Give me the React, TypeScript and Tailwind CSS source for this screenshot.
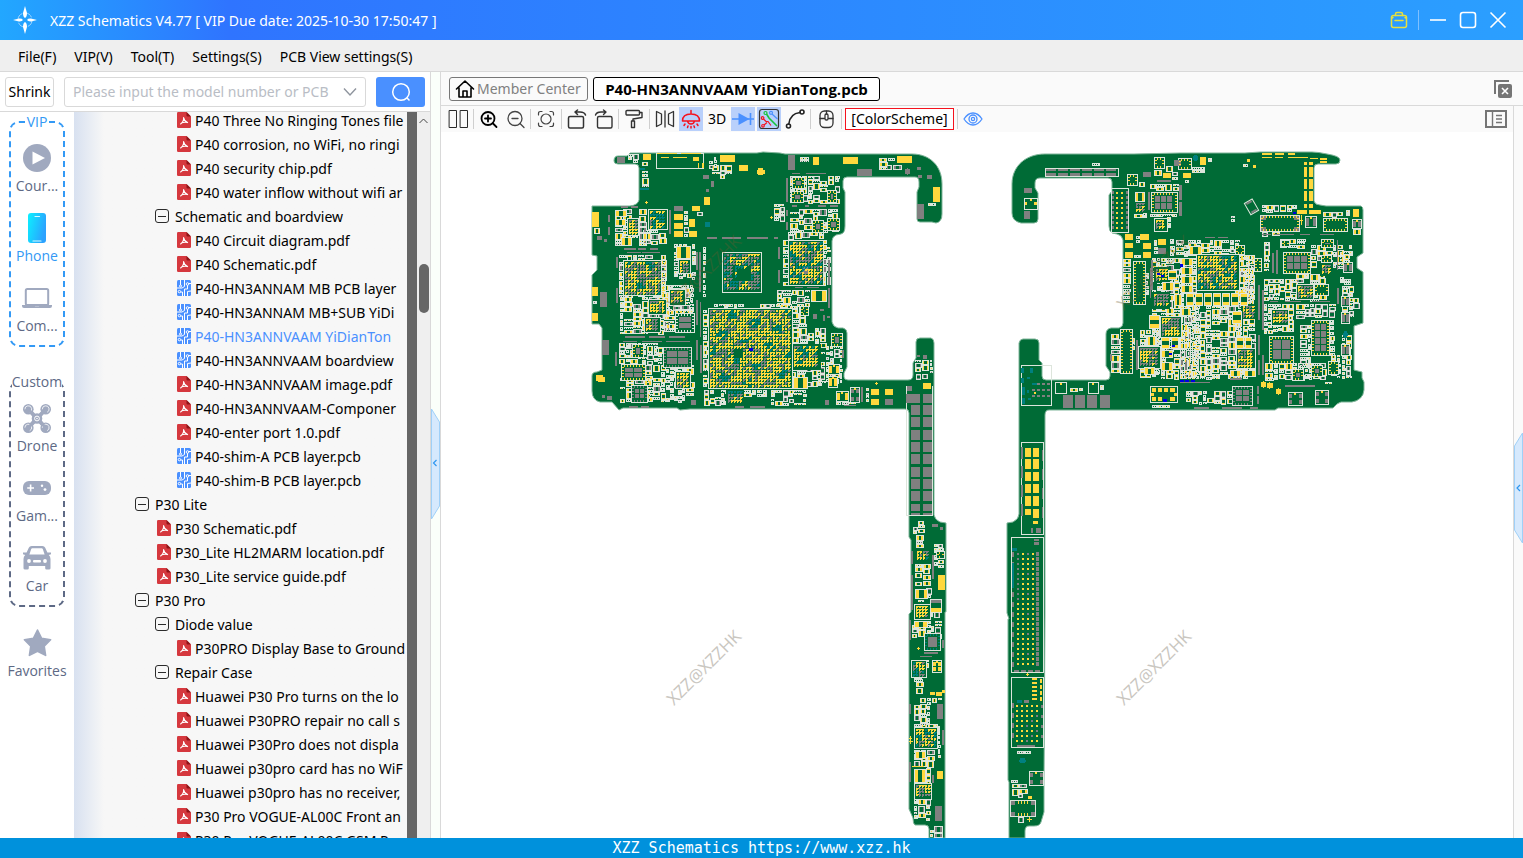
import type { ReactNode } from "react";

/* ---------- board drawing ---------- */

type Box = [number, number, number, number];
type Ink = "green" | "white" | "yellow" | "grey" | "teal" | "blue";

const INK: Record<Ink, string> = {
  green: "#006b36",
  white: "#dde5dc",
  yellow: "#ffd83d",
  grey: "#808080",
  teal: "#008080",
  blue: "#0000e0",
};
const ORDER: Ink[] = ["white", "green", "grey", "yellow", "teal", "blue"];
const CHIP_ORDER: Ink[] = ["green", "white", "grey", "yellow", "teal", "blue"];

function createPlotter(seedValue: number) {
  let seed = seedValue;
  const rnd = () => {
    seed = (seed * 1664525 + 1013904223) % 4294967296;
    return seed / 4294967296;
  };
  const blank = () => ({ green: "", white: "", yellow: "", grey: "", teal: "", blue: "" }) as Record<Ink, string>;
  const layers = [blank(), blank()];
  const rect = (ink: Ink, x: number, y: number, w: number, h: number, layer = 1) => {
    layers[layer][ink] += `M${x} ${y}h${w}v${h}h${-w}z`;
  };
  const frame = (x: number, y: number, w: number, h: number, layer = 1) => {
    rect("white", x, y, w, 1, layer);
    rect("white", x, y + h - 1, w, 1, layer);
    rect("white", x, y + 1, 1, h - 2, layer);
    rect("white", x + w - 1, y + 1, 1, h - 2, layer);
  };
  const many = (ink: Ink, list: Box[]) => list.forEach(([x, y, w, h]) => rect(ink, x, y, w, h));

  /* small passives packed in rows */
  const cluster = (list: Box[], gap = 0.12) =>
    list.forEach(([x0, y0, w0, h0]) => {
      let x = x0;
      while (x < x0 + w0 - 2) {
        const colW = Math.min(4 + Math.floor(rnd() * 6), x0 + w0 - x);
        let y = y0;
        while (y < y0 + h0 - 2) {
          const ch = Math.min(3 + Math.floor(rnd() * 5), y0 + h0 - y);
          const r = rnd();
          if (r > gap) {
            const w = colW - (rnd() > 0.6 ? 1 : 0);
            const h = ch - (rnd() > 0.6 ? 1 : 0);
            if (w < 5 || h < 4) {
              rect("white", x, y, w, Math.max(2, h - (h > 3 ? 1 : 0)), 0);
              const dot = rnd();
              const ink: Ink = dot > 0.55 ? "yellow" : dot > 0.35 ? "grey" : "green";
              for (let i = 1; i < w - 1; i += 2) rect(i % 4 === 1 ? ink : "green", x + i, y + 1, 1, 1, 0);
            } else {
              frame(x, y, w, h, 0);
              const pad: Ink = rnd() > 0.3 ? "yellow" : "grey";
              if (w >= h) {
                const pw = Math.max(1, Math.floor((w - 2) / 3));
                rect(pad, x + 1, y + 1, pw, h - 2, 0);
                rect(pad, x + w - 1 - pw, y + 1, pw, h - 2, 0);
              } else {
                rect(pad, x + 1, y + 1, w - 2, 1, 0);
                rect(pad, x + 1, y + h - 2, w - 2, 1, 0);
              }
            }
          }
          y += ch;
        }
        x += colW;
      }
    });

  const balls = (x0: number, y0: number, w: number, h: number, mix: Ink[], hole?: Box, framed = true) => {
    rect("green", x0 - 2, y0 - 2, w + 4, h + 4);
    if (framed) frame(x0 - 2, y0 - 2, w + 4, h + 4);
    for (let y = y0; y < y0 + h - 1; y += 3) {
      for (let x = x0; x < x0 + w - 1; x += 3) {
        if (hole && x > hole[0] && x < hole[0] + hole[2] && y > hole[1] && y < hole[1] + hole[3]) continue;
        const wave = Math.sin(x * 0.23 + y * 0.13) + Math.cos(y * 0.29 - x * 0.09) + (rnd() - 0.5) * 1.6;
        const ink = mix[Math.min(mix.length - 1, Math.max(0, Math.floor(((wave + 2) / 4) * mix.length)))];
        rect(ink, x, y, 2, 2);
        if (rnd() > 0.2) rect(ink, x + 2, y, 1, 1);
        if (rnd() > 0.2) rect(ink, x, y + 2, 1, 1);
      }
    }
  };

  /* packaged chip: frame, edge pins and optional thermal pads */
  const chip = (x: number, y: number, w: number, h: number, cols = 0, rows = 0, pin: Ink = "yellow") => {
    rect("green", x, y, w, h);
    frame(x, y, w, h);
    for (let i = x + 3; i < x + w - 3; i += 3) {
      rect(pin, i, y + 1, 1, 2);
      rect(pin, i, y + h - 3, 1, 2);
    }
    for (let j = y + 3; j < y + h - 3; j += 3) {
      rect(pin, x + 1, j, 2, 1);
      rect(pin, x + w - 3, j, 2, 1);
    }
    if (cols && rows) {
      const pw = Math.floor((w - 7) / cols);
      const ph = Math.floor((h - 7) / rows);
      for (let c = 0; c < cols; c++)
        for (let r = 0; r < rows; r++) rect("grey", x + 4 + c * pw, y + 4 + r * ph, pw - 1, ph - 1);
    }
  };

  /* framed square with four corner pads */
  const crystal = (x: number, y: number, w: number, h: number, pad: Ink = "grey") => {
    rect("green", x, y, w, h);
    frame(x, y, w, h);
    rect(pad, x + 1, y + 2, 3, 4);
    rect(pad, x + w - 4, y + 2, 3, 4);
    rect(pad, x + 1, y + h - 6, 3, 4);
    rect(pad, x + w - 4, y + h - 6, 3, 4);
    rect("yellow", x + Math.floor(w / 2) - 1, y + 1, 2, 2);
  };

  /* two-terminal part with wide end pads */
  const part = (x: number, y: number, w: number, h: number, upright = false) => {
    rect("green", x, y, w, h);
    frame(x, y, w, h);
    if (upright) {
      const p = Math.floor((h - 2) / 3);
      rect("yellow", x + 1, y + 1, w - 2, p);
      rect("yellow", x + 1, y + h - 1 - p, w - 2, p);
    } else {
      const p = Math.floor((w - 2) / 3);
      rect("yellow", x + 1, y + 1, p, h - 2);
      rect("yellow", x + w - 1 - p, y + 1, p, h - 2);
    }
  };

  return { rect, frame, many, cluster, balls, chip, crystal, part, layers };
}

type Plotter = ReturnType<typeof createPlotter>;

function plotLeft(): Plotter {
  const p = createPlotter(42);
  p.frame(656, 153, 48, 16);
  p.many("yellow", [
    [657, 153, 20, 1], [681, 153, 20, 1], [661, 157, 8, 1], [673, 157, 14, 1], [693, 157, 6, 4], [698, 163, 1, 5], [702, 163, 2, 5],
    [643, 154, 8, 6], [720, 155, 15, 7], [739, 165, 9, 6], [758, 168, 5, 7], [757, 170, 8, 4], [704, 197, 6, 8], [692, 206, 8, 5],
    [674, 214, 9, 6], [674, 223, 9, 6], [674, 231, 9, 6], [689, 219, 6, 8], [689, 231, 8, 6],
    [592, 212, 7, 15], [592, 287, 6, 9], [592, 313, 6, 8], [596, 375, 7, 6], [598, 377, 7, 5],
    [813, 157, 6, 8], [843, 157, 15, 7], [897, 156, 15, 7], [933, 187, 7, 15],
    [871, 389, 8, 6], [885, 389, 8, 6], [871, 399, 8, 6], [923, 383, 8, 6],
    [938, 575, 7, 15], [937, 771, 6, 8], [930, 692, 5, 3], [936, 692, 6, 4], [942, 690, 3, 3], [875, 383, 3, 1], [876, 382, 1, 3],
    [645, 202, 3, 1], [646, 201, 1, 3], [770, 217, 3, 1], [771, 216, 1, 3],
  ]);
  p.many("grey", [
    [617, 157, 8, 6], [674, 206, 9, 5], [703, 175, 6, 4], [711, 181, 3, 6], [706, 189, 3, 3],
    [621, 206, 7, 2], [631, 206, 7, 2], [608, 215, 2, 7], [608, 227, 2, 8], [597, 236, 5, 4], [604, 239, 3, 3],
    [600, 292, 7, 15], [602, 340, 7, 15], [602, 395, 3, 3], [607, 396, 5, 4], [669, 210, 2, 24],
    [707, 237, 10, 2], [722, 237, 19, 2], [747, 237, 21, 2], [774, 237, 4, 2],
    [624, 248, 12, 2], [638, 248, 8, 2], [650, 248, 8, 2], [627, 252, 14, 1], [642, 252, 18, 1],
    [616, 257, 2, 11], [616, 288, 2, 15], [615, 352, 2, 14], [696, 252, 2, 18], [699, 252, 2, 40], [696, 300, 2, 25], [700, 302, 1, 35],
    [625, 336, 20, 2], [649, 336, 16, 2], [669, 336, 16, 2], [623, 341, 14, 1], [642, 341, 20, 1], [666, 341, 24, 1],
    [696, 340, 2, 20], [700, 345, 2, 28], [691, 400, 5, 5], [629, 406, 9, 2], [641, 406, 8, 2], [735, 406, 9, 2], [750, 406, 15, 2],
    [788, 155, 7, 15], [857, 169, 15, 7], [905, 169, 5, 5], [907, 168, 1, 7], [917, 167, 4, 3], [918, 175, 4, 3], [927, 175, 5, 4],
    [917, 204, 7, 15], [786, 178, 2, 24], [792, 173, 8, 1], [806, 173, 20, 1], [786, 210, 2, 6], [786, 222, 2, 8],
    [792, 205, 5, 2], [805, 205, 4, 2], [818, 205, 8, 2], [830, 205, 8, 2], [778, 247, 2, 12], [778, 270, 2, 13], [828, 260, 2, 25], [828, 288, 2, 20],
    [795, 287, 8, 1], [807, 287, 12, 1], [813, 314, 4, 5], [820, 309, 4, 2], [823, 315, 2, 6], [827, 316, 3, 2], [842, 350, 2, 8],
    [885, 399, 8, 6], [861, 387, 2, 15], [825, 400, 4, 5], [844, 405, 12, 1], [917, 355, 3, 2], [923, 355, 4, 4],
    [907, 386, 5, 5], [906, 394, 14, 9], [923, 394, 9, 9], [932, 524, 6, 3], [940, 527, 3, 3], [911, 551, 2, 13], [911, 575, 2, 35],
    [932, 555, 2, 24], [924, 652, 14, 2], [920, 656, 12, 1], [909, 620, 2, 20], [909, 704, 2, 10], [909, 762, 2, 20],
    [937, 704, 6, 15], [935, 806, 7, 15], [942, 730, 2, 15], [932, 775, 2, 8], [942, 640, 2, 8],
  ]);
  [405, 417, 430, 442, 454, 467, 479, 491, 504].forEach((y, i) => {
    p.rect("grey", 911, y, 9, i === 8 ? 7 : 10);
    p.rect("grey", 923, y, 9, i === 8 ? 7 : 10);
  });
  p.rect("grey", 911, 513, 9, 2);
  p.rect("grey", 923, 513, 9, 2);
  p.rect("white", 906, 386, 1, 130);
  p.rect("white", 906, 515, 27, 1);
  p.rect("white", 932, 386, 1, 130);
  p.rect("teal", 705, 222, 5, 5);
  p.rect("teal", 640, 188, 9, 2);
  p.rect("teal", 640, 168, 5, 2);
  p.cluster([
    [628, 154, 12, 9], [642, 162, 8, 28], [709, 157, 8, 12], [712, 165, 20, 10], [720, 175, 6, 6], [684, 211, 5, 27], [697, 212, 7, 4],
    [615, 209, 32, 37], [643, 230, 26, 17], [594, 228, 6, 6], [593, 298, 5, 8],
    [619, 255, 48, 43], [660, 262, 8, 32], [674, 244, 22, 36], [620, 297, 52, 38], [662, 285, 32, 28], [666, 310, 28, 24], [684, 288, 10, 16],
    [619, 343, 44, 22], [644, 365, 52, 38], [620, 378, 30, 26], [703, 247, 3, 50], [703, 310, 5, 78], [704, 390, 34, 16], [743, 390, 26, 8], [714, 304, 76, 5],
    [800, 157, 11, 14], [879, 158, 16, 12], [886, 165, 18, 8], [928, 203, 8, 5],
    [790, 176, 50, 28], [790, 209, 50, 24], [774, 204, 11, 18], [783, 240, 48, 46], [788, 232, 38, 8], [777, 290, 34, 17], [790, 306, 19, 22],
    [791, 328, 36, 20], [820, 346, 23, 38], [790, 366, 32, 22], [771, 390, 36, 16], [836, 402, 20, 3], [866, 388, 3, 16],
    [915, 360, 18, 14], [916, 374, 12, 6],
    [913, 521, 12, 14], [916, 535, 10, 14], [934, 544, 10, 24], [915, 564, 16, 22], [926, 588, 6, 12], [918, 600, 12, 5], [929, 612, 12, 6],
    [912, 621, 30, 18], [914, 672, 10, 10], [916, 682, 8, 14], [914, 698, 17, 28], [914, 724, 24, 25], [914, 750, 23, 18], [926, 768, 5, 30], [914, 799, 18, 22],
    [917, 660, 14, 10], [932, 698, 11, 5], [930, 826, 13, 12], [938, 726, 3, 34],
  ], 0.1);
  p.balls(650, 211, 16, 17, ["teal", "yellow", "teal", "yellow", "grey"]);
  p.balls(629, 220, 8, 14, ["yellow", "grey", "yellow"]);
  p.balls(625, 262, 35, 32, ["yellow", "grey", "grey", "yellow", "grey", "yellow", "teal"]);
  p.part(676, 246, 15, 13);
  p.balls(680, 261, 9, 11, ["grey", "yellow"]);
  p.balls(650, 301, 15, 12, ["yellow", "grey", "yellow"]);
  p.balls(646, 319, 13, 12, ["grey", "yellow", "grey"]);
  p.balls(671, 291, 13, 13, ["yellow", "grey", "yellow"]);
  p.chip(675, 313, 20, 20, 1, 2, "white");
  p.chip(663, 347, 29, 21, 2, 2, "grey");
  p.chip(621, 364, 25, 17, 2, 2);
  p.chip(631, 385, 17, 18, 2, 2, "grey");
  p.balls(677, 373, 12, 14, ["yellow", "grey", "yellow"]);
  p.chip(632, 344, 12, 14, 1, 1);
  p.part(615, 210, 12, 7);
  p.part(615, 219, 11, 7);
  p.part(621, 237, 11, 9);
  p.balls(710, 310, 81, 77, ["yellow", "yellow", "grey", "yellow", "yellow", "grey", "yellow", "teal"], [732, 348, 10, 9]);
  p.rect("blue", 749, 348, 4, 3);
  p.balls(724, 254, 36, 37, ["teal", "grey", "yellow", "grey", "teal", "grey"], [732, 264, 18, 17]);
  p.balls(735, 266, 12, 12, ["yellow", "teal", "yellow"], [737, 268, 8, 8], false);
  p.balls(728, 391, 14, 13, ["teal", "grey", "yellow"], undefined, false);
  p.balls(790, 242, 32, 42, ["yellow", "grey", "teal", "yellow", "grey", "yellow"]);
  p.rect("grey", 802, 266, 7, 8);
  p.chip(792, 177, 13, 12, 1, 1);
  p.chip(791, 191, 13, 12, 1, 1);
  p.chip(827, 190, 10, 13, 1, 1);
  p.chip(812, 220, 12, 13, 1, 1);
  p.chip(827, 218, 13, 13, 1, 1);
  p.part(811, 290, 16, 12);
  p.balls(794, 346, 25, 22, ["yellow", "teal", "yellow", "grey", "yellow"], undefined, false);
  p.part(793, 377, 15, 12);
  p.chip(831, 333, 12, 14, 1, 1);
  p.crystal(828, 364, 12, 11, "yellow");
  p.crystal(828, 376, 10, 12, "yellow");
  p.crystal(836, 391, 13, 11, "yellow");
  p.crystal(850, 387, 10, 16);
  p.chip(800, 306, 9, 10, 1, 1);
  p.balls(917, 551, 12, 10, ["teal", "yellow", "grey"], undefined, false);
  p.part(915, 589, 13, 10);
  p.rect("green", 930, 599, 12, 14);
  p.frame(930, 599, 12, 14);
  p.rect("grey", 931, 600, 10, 3);
  p.rect("yellow", 931, 608, 10, 4);
  p.chip(936, 551, 9, 8);
  p.balls(916, 606, 13, 12, ["yellow", "grey", "yellow"]);
  p.part(914, 621, 14, 7);
  p.chip(924, 633, 17, 18, 1, 1, "teal");
  p.balls(913, 662, 12, 14, ["teal", "yellow", "grey", "teal"]);
  p.crystal(932, 660, 10, 13, "yellow");
  p.balls(916, 729, 20, 18, ["yellow", "yellow", "teal", "yellow", "grey", "yellow"]);
  p.part(914, 769, 12, 14);
  p.part(915, 751, 11, 8);
  p.balls(916, 785, 14, 13, ["yellow", "grey", "yellow"]);
  p.many("yellow", [[917, 648, 3, 1], [918, 647, 1, 3], [909, 738, 3, 1], [909, 741, 4, 1], [910, 736, 1, 8], [912, 766, 12, 1]]);
  return p;
}

function plotRight(): Plotter {
  const p = createPlotter(1207);
  p.frame(1045, 168, 74, 9);
  for (let i = 0; i < 6; i++) {
    p.rect("grey", 1046 + i * 12, 169, 10, 2);
    p.rect("grey", 1046 + i * 12, 173, 10, 3);
  }
  p.many("grey", [
    [1024, 188, 8, 5], [1024, 211, 6, 8], [1143, 172, 8, 5], [1148, 192, 2, 18], [1179, 202, 3, 14], [1179, 185, 3, 15], [1157, 180, 14, 2],
    [1174, 160, 7, 6], [1158, 248, 8, 6], [1151, 260, 2, 30], [1150, 268, 1, 30], [1136, 340, 2, 30], [1110, 354, 2, 7],
    [1063, 395, 10, 13], [1075, 395, 10, 13], [1087, 395, 10, 13], [1100, 395, 10, 13],
    [1205, 237, 10, 1], [1218, 237, 10, 1], [1262, 234, 9, 1], [1274, 234, 20, 1], [1300, 234, 10, 1], [1320, 234, 14, 1],
    [1272, 253, 2, 20], [1276, 250, 2, 24], [1337, 240, 1, 30], [1337, 288, 2, 16], [1258, 285, 2, 35], [1262, 290, 2, 40], [1258, 335, 2, 20], [1262, 355, 2, 20],
    [1258, 360, 2, 15], [1270, 301, 8, 1], [1285, 301, 16, 1], [1312, 301, 18, 1], [1230, 378, 12, 2], [1285, 385, 30, 2], [1194, 407, 15, 2], [1222, 407, 20, 2],
    [1250, 407, 8, 2], [1257, 386, 2, 8], [1257, 396, 2, 8], [1180, 382, 30, 1],
    [1036, 528, 5, 5], [1031, 528, 2, 5], [1034, 539, 5, 2], [1034, 542, 5, 3],
  ]);
  p.many("yellow", [
    [1163, 173, 8, 5], [1183, 173, 8, 5], [1200, 157, 6, 8], [1125, 234, 8, 6], [1140, 234, 9, 6], [1125, 243, 8, 5], [1143, 243, 8, 6], [1125, 252, 8, 6],
    [1143, 252, 8, 6], [1158, 239, 8, 6], [1262, 153, 10, 2], [1275, 153, 9, 2], [1288, 153, 7, 2], [1262, 157, 10, 1], [1275, 157, 8, 1], [1288, 157, 20, 1],
    [1310, 158, 8, 1], [1320, 158, 7, 2], [1320, 161, 7, 2],
    [1304, 162, 3, 3], [1309, 162, 4, 3], [1304, 167, 3, 10], [1309, 167, 4, 10], [1304, 179, 3, 10], [1309, 179, 4, 10], [1304, 191, 3, 10], [1309, 191, 4, 10],
    [1304, 204, 3, 4], [1309, 204, 4, 4], [1297, 210, 10, 4], [1309, 210, 12, 4], [1353, 209, 6, 8], [1253, 165, 3, 3], [1247, 159, 3, 3],
    [1261, 382, 5, 5], [1263, 381, 1, 7], [1267, 383, 6, 5], [1269, 382, 1, 7], [1276, 389, 5, 5], [1278, 388, 1, 7], [1301, 215, 1, 10], [1300, 220, 3, 1],
    [1025, 448, 6, 9], [1033, 448, 6, 9], [1025, 459, 6, 10], [1033, 459, 6, 10], [1025, 472, 6, 9], [1033, 472, 6, 9], [1025, 484, 6, 9], [1033, 484, 6, 9],
    [1025, 496, 6, 10], [1033, 496, 6, 10], [1025, 509, 6, 6], [1033, 509, 6, 9], [1033, 521, 5, 3],
    [1026, 674, 3, 1], [1027, 673, 1, 3], [1027, 819, 5, 1], [1029, 817, 1, 5], [1028, 796, 4, 3],
  ]);
  p.cluster([
    [1092, 163, 9, 4], [1139, 182, 8, 5], [1154, 170, 8, 8], [1166, 166, 8, 6], [1172, 172, 6, 8], [1150, 184, 29, 7], [1150, 214, 27, 3], [1167, 217, 4, 14],
    [1134, 210, 13, 9], [1136, 236, 4, 8], [1134, 255, 8, 3], [1154, 240, 4, 16], [1170, 239, 5, 17], [1185, 180, 5, 6], [1192, 167, 14, 8], [1208, 158, 6, 8], [1243, 160, 6, 8],
    [1123, 259, 9, 44], [1111, 334, 9, 40], [1130, 338, 5, 12], [1145, 273, 4, 28],
    [1152, 258, 45, 122], [1140, 330, 20, 48], [1176, 240, 66, 18], [1235, 255, 20, 52], [1180, 306, 62, 74], [1238, 304, 18, 75], [1238, 255, 18, 50],
    [1231, 216, 8, 6], [1262, 205, 35, 8], [1262, 232, 18, 5], [1323, 212, 22, 6], [1346, 210, 5, 8], [1353, 229, 8, 6],
    [1264, 242, 8, 32], [1280, 239, 28, 10], [1311, 245, 42, 24], [1340, 252, 13, 34], [1264, 279, 36, 22], [1296, 274, 30, 10], [1310, 295, 20, 8],
    [1264, 304, 30, 30], [1296, 304, 40, 16], [1300, 325, 11, 45], [1330, 320, 6, 36], [1265, 363, 64, 18], [1331, 355, 10, 24], [1342, 286, 12, 34], [1342, 335, 10, 44],
    [1353, 298, 7, 12], [1325, 382, 10, 4],
    [1186, 391, 48, 14], [1070, 388, 14, 4], [1100, 385, 4, 8], [1152, 405, 20, 3],
    [1017, 751, 14, 4], [1011, 780, 7, 4], [1012, 784, 16, 12], [1018, 794, 8, 5], [1018, 817, 8, 8], [1196, 305, 4, 70],
  ], 0.07);
  p.crystal(1024, 198, 14, 12, "green");
  p.rect("yellow", 1025, 202, 2, 3);
  p.rect("yellow", 1034, 202, 3, 3);
  p.frame(1111, 188, 18, 45);
  for (let i = 0; i < 8; i++) {
    p.rect("yellow", 1116, 192 + i * 5, 2, 2);
    p.rect("yellow", 1121, 192 + i * 5, 2, 2);
    p.rect("grey", 1112, 191 + i * 5, 2, 3);
    p.rect("grey", 1126, 191 + i * 5, 2, 3);
  }
  p.chip(1127, 174, 11, 12);
  p.chip(1154, 157, 11, 12);
  p.chip(1178, 158, 14, 12);
  p.part(1135, 192, 10, 10);
  p.balls(1136, 203, 9, 8, ["yellow", "grey", "yellow"], undefined, false);
  p.chip(1151, 192, 27, 21, 3, 2);
  p.balls(1156, 220, 10, 10, ["yellow", "grey", "yellow"]);
  p.chip(1133, 261, 13, 44);
  p.chip(1120, 329, 13, 45);
  p.balls(1156, 269, 12, 12, ["yellow", "grey", "yellow"], undefined, false);
  p.balls(1154, 294, 14, 13, ["yellow", "grey", "grey", "yellow"], undefined, false);
  p.balls(1162, 318, 18, 18, ["yellow", "grey", "grey", "yellow"]);
  p.balls(1140, 348, 19, 19, ["yellow", "grey", "grey", "yellow"]);
  p.part(1149, 315, 11, 14, true);
  p.part(1168, 270, 9, 10, true);
  p.part(1162, 282, 12, 9);
  p.part(1174, 294, 8, 12);
  p.part(1161, 337, 9, 12, true);
  p.part(1171, 337, 8, 12, true);
  p.part(1147, 336, 9, 10);
  p.part(1161, 350, 12, 8);
  p.part(1161, 362, 12, 9);
  p.part(1144, 367, 11, 8);
  p.many("blue", [[1157, 273, 3, 2], [1161, 275, 3, 2], [1172, 345, 3, 2], [1169, 353, 3, 2], [1180, 264, 3, 3], [1293, 212, 3, 2], [1180, 380, 4, 2], [1185, 380, 4, 2], [1191, 380, 4, 2]]);
  p.balls(1198, 256, 40, 33, ["yellow", "grey", "yellow", "teal", "grey", "yellow"]);
  for (let i = 0; i < 4; i++) p.part(1181, 258 + i * 9, 12, 8);
  for (let i = 0; i < 7; i++) p.part(1186 + i * 9, 293, 8, 13, true);
  p.part(1189, 246, 13, 9);
  p.part(1181, 308, 10, 8);
  p.chip(1235, 245, 10, 10);
  p.chip(1254, 258, 8, 14);
  p.balls(1243, 306, 12, 11, ["yellow", "grey", "yellow"], undefined, false);
  p.part(1232, 311, 10, 13, true);
  p.part(1236, 337, 8, 12, true);
  p.part(1245, 337, 7, 12, true);
  p.balls(1238, 350, 16, 17, ["grey", "yellow", "grey", "yellow"]);
  p.part(1230, 370, 11, 7);
  p.part(1244, 370, 12, 7);
  p.chip(1260, 215, 40, 17);
  p.many("grey", [[1261, 216, 5, 4], [1294, 216, 5, 4], [1261, 227, 5, 4], [1294, 227, 5, 4]]);
  p.crystal(1305, 216, 12, 12);
  p.chip(1323, 218, 25, 14);
  p.crystal(1352, 219, 10, 10);
  p.chip(1283, 252, 28, 22, 3, 2);
  p.chip(1281, 240, 9, 7);
  p.chip(1321, 239, 13, 9, 1, 1);
  p.chip(1321, 255, 11, 8, 1, 1);
  p.balls(1322, 265, 9, 9, ["yellow", "grey", "yellow"], undefined, false);
  p.balls(1298, 286, 14, 12, ["grey", "yellow", "grey"]);
  p.chip(1314, 284, 15, 12);
  p.balls(1273, 311, 14, 13, ["grey", "yellow", "yellow", "grey"]);
  p.chip(1311, 320, 19, 36, 2, 4);
  p.chip(1269, 336, 25, 28, 2, 2);
  p.chip(1292, 369, 12, 12, 1, 1);
  p.chip(1311, 365, 12, 12, 1, 1);
  p.chip(1328, 361, 11, 14);
  p.crystal(1343, 262, 10, 11);
  p.crystal(1341, 296, 9, 11);
  p.crystal(1341, 312, 9, 12);
  p.crystal(1341, 344, 9, 12);
  p.rect("green", 1150, 386, 28, 17);
  p.frame(1150, 386, 28, 17);
  p.many("yellow", [
    [1152, 388, 4, 4], [1158, 388, 4, 4], [1164, 388, 4, 4], [1170, 388, 5, 4],
    [1152, 397, 4, 4], [1158, 397, 4, 4], [1170, 397, 5, 4], [1151, 393, 3, 3], [1174, 393, 3, 3],
  ]);
  p.rect("blue", 1163, 399, 4, 3);
  p.chip(1232, 386, 21, 20, 2, 2, "grey");
  p.crystal(1288, 392, 15, 14);
  p.crystal(1315, 390, 14, 15);
  p.frame(1021, 365, 31, 41);
  p.many("teal", [
    [1021, 368, 3, 5], [1030, 368, 3, 5], [1021, 378, 3, 5], [1027, 377, 3, 2], [1032, 383, 5, 2], [1022, 387, 3, 8], [1027, 390, 2, 3], [1022, 398, 3, 6],
    [1028, 398, 3, 2], [1193, 156, 5, 4], [1194, 155, 3, 6], [1343, 333, 5, 3], [1344, 331, 3, 7], [1012, 548, 5, 3], [1012, 563, 2, 25], [1020, 758, 5, 5], [1019, 760, 7, 2], [1017, 700, 5, 3],
  ]);
  for (let i = 0; i < 4; i++) for (let j = 0; j < 3; j++) p.rect("grey", 1032 + i * 5, 383 + j * 6, 3, 2);
  p.rect("yellow", 1034, 392, 2, 2);
  p.crystal(1055, 382, 12, 12, "green");
  p.crystal(1088, 382, 11, 12, "green");
  p.frame(1021, 442, 23, 93);
  for (let i = 0; i < 4; i++) {
    p.rect("grey", 1021, 447 + i * 19, 2, 12);
    p.rect("grey", 1042, 450 + i * 19, 1, 11);
  }
  p.frame(1011, 537, 33, 136);
  for (let j = 0; j < 23; j++) {
    const y = 553 + j * 5;
    for (let c = 0; c < 4; c++) p.rect((c === 0 && j < 10) || (c === 2 && j % 4 === 0) ? "grey" : "yellow", 1017 + c * 5, y, 2, 2);
    p.rect("grey", 1036, y - 1, 3, 4);
    if (j % 2 === 0) p.rect("grey", 1012, y - 1, 2, 5);
  }
  for (let i = 0; i < 4; i++) p.rect("grey", 1014 + i * 7, 670, 5, 2);
  p.frame(1011, 677, 33, 71);
  for (let j = 0; j < 8; j++) {
    const y = 705 + j * 5;
    for (let c = 0; c < 5; c++) p.rect(c > 1 && j > 1 && (c + j) % 3 === 0 ? "grey" : "yellow", 1016 + c * 5, y, 2, 2);
    if (j % 2 === 0) {
      p.rect("grey", 1012, y - 2, 2, 5);
      p.rect("grey", 1041, y, 2, 3);
    }
  }
  for (let j = 0; j < 6; j++) p.rect("yellow", 1032, 678 + j * 4, 5, 2);
  for (let j = 0; j < 4; j++) p.rect("yellow", 1040, 679 + j * 6, 2, 4);
  p.rect("grey", 1024, 700, 5, 3);
  p.rect("grey", 1017, 745, 18, 2);
  p.crystal(1029, 771, 15, 15);
  p.rect("green", 1010, 800, 26, 17);
  p.frame(1010, 800, 26, 17);
  for (let i = 0; i < 4; i++) {
    p.rect("yellow", 1018 + i * 3, 801, 1, 3);
    p.rect("yellow", 1018 + i * 3, 813, 1, 3);
  }
  p.many("grey", [[1011, 801, 4, 4], [1011, 812, 4, 4], [1031, 801, 4, 4], [1031, 812, 4, 4]]);
  return p;
}

const OUTLINE_LEFT =
  "M614 161Q614 156 618 156H627L630 153H757L763 152L780 153L785 154H912C930 154 942 166 942 184V214Q942 222 936 223L932 222H920Q917 222 917 219V192L919 187V182Q919 177 915 177H847Q843 177 843 181V188L845 192V226Q845 233 841 234L836 235Q832 237 832 241V322Q833 327 838 328H843Q847 329 847 333V367L844 373V377Q844 380 848 380H908Q913 380 913 375V363L916 358V342Q916 338 920 338H931Q934 339 934 343V515Q935 520 940 522L946 523V612H945V838H929V829Q929 825 925 825H915Q913 824 913 818L909 809V614L911 612V540L909 537V413Q909 409 905 409H690L680 410L677 408H623L619 410L612 402H600Q592 400 592 391V376Q592 372 597 372L602 370V328L599 324H592V275L597 270V256L592 255V206H630Q638 205 639 200V168Q639 164 635 164H618Q614 164 614 161Z";
const OUTLINE_RIGHT =
  "M1045 154H1134L1180 153H1245L1260 152H1312Q1318 152 1327 154Q1340 156 1340 160Q1340 164 1336 164H1318Q1314 164 1314 168V201Q1315 205 1320 205L1326 206H1361Q1363 207 1363 210V253L1357 257V268L1363 272V323L1354 326V370L1362 372V378L1364 382V390Q1363 400 1352 402H1341Q1337 403 1333 408H1278L1275 410H1049Q1045 410 1045 415V613L1044 780V812L1041 822Q1040 826 1034 826H1029Q1025 826 1025 831V838H1009V782L1008 780V619H1009L1007 613V523L1013 522Q1019 519 1019 514V343Q1020 339 1023 339H1035Q1039 339 1039 343V360L1042 363V376Q1042 380 1046 380H1106Q1110 380 1110 376V372L1106 366V334Q1106 329 1111 328H1119Q1123 327 1123 323V240Q1122 235 1117 234L1112 233Q1109 231 1109 226V195L1112 191V182Q1112 178 1108 178H1040Q1035 178 1035 183V188L1038 193V219Q1038 223 1034 223H1021Q1012 221 1012 213V184C1012 166 1026 154 1045 154Z";

function Board({ outline, plot, children }: { outline: string; plot: Plotter; children?: ReactNode }) {
  return (
    <g>
      <path d={outline} fill={INK.green} stroke="#7fb599" strokeWidth="1" />
      <g shapeRendering="crispEdges">
        {plot.layers.map((layer, i) => (
          <g key={i}>
            {(i === 0 ? ORDER : CHIP_ORDER).map((ink) => (layer[ink] ? <path key={ink} d={layer[ink]} fill={INK[ink]} /> : null))}
          </g>
        ))}
      </g>
      {children}
    </g>
  );
}

const leftPlot = plotLeft();
const rightPlot = plotRight();

const MARKS: [number, number, number][] = [
  [674, 706, 1],
  [1124, 706, 1],
  [674, 311, 0.35],
  [1124, 311, 0.35],
];

function BoardView() {
  return (
    <svg className="block h-full w-full" viewBox="441 132 1072 706" preserveAspectRatio="xMidYMin slice" role="img" aria-label="P40-HN3ANNVAAM board">
      <Board outline={OUTLINE_LEFT} plot={leftPlot} />
      <Board outline={OUTLINE_RIGHT} plot={rightPlot}>
        <g transform="rotate(-30 1251 206)">
          <rect x="1246.5" y="200.5" width="9" height="13" fill={INK.green} stroke={INK.white} />
          <path d="M1248 202H1254M1248 212H1254" stroke={INK.grey} strokeWidth="2" />
        </g>
      </Board>
      {MARKS.map(([x, y, o]) => (
        <text key={`${x}-${y}`} transform={`translate(${x} ${y}) rotate(-45)`} fill={o === 1 ? "#c9c6c0" : "#6b5a2e"} opacity={o} fontSize="17" fontFamily="Open Sans, sans-serif">
          XZZ@XZZHK
        </text>
      ))}
    </svg>
  );
}

/* ---------- icons ---------- */

function Icon({ children, size = 20, color = "#2a2a2a", width = 1.5 }: { children: ReactNode; size?: number; color?: string; width?: number }) {
  return (
    <svg width={size} height={size} viewBox="0 0 20 20" fill="none" stroke={color} strokeWidth={width} strokeLinecap="round" strokeLinejoin="round" aria-hidden="true">
      {children}
    </svg>
  );
}

const PdfIcon = () => (
  <svg width="14" height="16" viewBox="0 0 14 16" aria-hidden="true" className="shrink-0">
    <path d="M1.2 0H9.5L14 4.5V14.8Q14 16 12.8 16H1.2Q0 16 0 14.8V1.2Q0 0 1.2 0Z" fill="#d5383e" />
    <path d="M9.5 0L14 4.5H10.5Q9.5 4.5 9.5 3.5Z" fill="#8e1418" />
    <path d="M6.6 5.6C7 7.8 8 9.6 10.6 10.6M6.6 5.6C6.8 8.2 5.8 10.4 3.6 12M4.8 10.8Q7 9.8 10.4 10.4" fill="none" stroke="#fff" strokeWidth="1.1" strokeLinecap="round" />
  </svg>
);

const PcbIcon = () => (
  <svg width="14" height="16" viewBox="0 0 14 16" aria-hidden="true" className="shrink-0">
    <rect width="14" height="16" rx="1.5" fill="#4a90ff" />
    <g stroke="#fff" strokeWidth="1" fill="none">
      <path d="M3.5 0V5.5M7.5 0V6.5L5 8H0M7.5 10V16M10.5 16V11.5L14 11M10.5 5V9H7.5V12M5.5 16V12H3M11 3.5H14" />
      <circle cx="3.5" cy="6" r="1" fill="#4a90ff" />
      <circle cx="2.4" cy="11.6" r="1.2" fill="#4a90ff" />
      <circle cx="10.5" cy="4" r="1.3" fill="#4a90ff" />
    </g>
  </svg>
);

const Minus = () => (
  <svg width="14" height="14" viewBox="0 0 14 14" fill="none" stroke="#2b2b2b" aria-hidden="true" className="shrink-0">
    <rect x="0.5" y="0.5" width="13" height="13" rx="2.5" />
    <path d="M3 7.5H11" />
  </svg>
);

const GREY = "#a0a9bf";

const CourseIcon = () => (
  <svg width="28" height="28" viewBox="0 0 28 28" aria-hidden="true">
    <circle cx="14" cy="14" r="14" fill={GREY} />
    <path d="M9.5 7.5V20.5L22 14Z" fill="#fff" />
  </svg>
);
const PhoneIcon = () => (
  <svg width="18" height="30" viewBox="0 0 18 30" aria-hidden="true">
    <defs>
      <linearGradient id="phone" x1="0" y1="0" x2="1" y2="0.4">
        <stop offset="0" stopColor="#0cf1ff" />
        <stop offset="1" stopColor="#2ba2ff" />
      </linearGradient>
    </defs>
    <rect width="18" height="30" rx="3" fill="url(#phone)" />
    <path d="M7 3.5H11.5M5 28H13" stroke="#d8fbff" strokeWidth="1.2" strokeLinecap="round" />
  </svg>
);
const ComputerIcon = () => (
  <svg width="30" height="20" viewBox="0 0 30 20" aria-hidden="true">
    <rect x="3.8" y="1" width="22.4" height="16" rx="1.5" fill="none" stroke={GREY} strokeWidth="2" />
    <path d="M0 17H12L13 18.2H17L18 17H30V18Q30 20 28 20H2Q0 20 0 18Z" fill={GREY} />
  </svg>
);
const DroneIcon = () => (
  <svg width="28" height="29" viewBox="0 0 28 29" aria-hidden="true">
    <path d="M6 6L14 14.5L22 6M6 23L14 14.5L22 23" stroke={GREY} strokeWidth="4" fill="none" />
    <circle cx="14" cy="14.5" r="5.3" fill={GREY} />
    {[[5.3, 5.3], [22.7, 5.3], [5.3, 23.7], [22.7, 23.7]].map(([x, y]) => (
      <g key={`${x}${y}`}>
        <circle cx={x} cy={y} r="5.3" fill={GREY} />
        <path d={`M${x - 3.4} ${y}A3.4 3.4 0 1 1 ${x + 1.4} ${y + 3}`} stroke="#fff" strokeWidth="0.8" fill="none" />
      </g>
    ))}
    <path d="M6 6L11 11.4M22 6L17 11.4M6 23L11 17.6M22 23L17 17.6" stroke={GREY} strokeWidth="3" />
    <circle cx="14" cy="14.5" r="2.4" stroke="#fff" strokeWidth="1" fill="none" />
    <circle cx="14" cy="14.5" r="0.8" fill="#fff" />
  </svg>
);
const GameIcon = () => (
  <svg width="28" height="14" viewBox="0 0 28 14" aria-hidden="true">
    <rect width="28" height="14" rx="6" fill={GREY} />
    <path d="M4.2 7H11M7.6 3.6V10.4" stroke="#fff" strokeWidth="1.6" />
    <circle cx="19" cy="4.8" r="1.2" fill="#fff" />
    <circle cx="22" cy="8.6" r="1.4" fill="#fff" />
  </svg>
);
const CarIcon = () => (
  <svg width="28" height="24" viewBox="0 0 28 24" aria-hidden="true">
    <path d="M0 6.6H3.6L5.8 1.8Q6.6 0 8.6 0H19.4Q21.4 0 22.2 1.8L24.4 6.6H28V8.2L25.8 9Q27.5 10.5 27.5 13V22.2Q27.5 23.6 26 23.6H23.6Q22.2 23.6 22.2 22.2V20H5.8V22.2Q5.8 23.6 4.4 23.6H2Q.5 23.6 .5 22.2V13Q.5 10.5 2.2 9L0 8.2ZM6.4 8.6H21.6L19.8 3Q19.5 2.2 18.6 2.2H9.4Q8.5 2.2 8.2 3Z" fill={GREY} fillRule="evenodd" />
    <circle cx="6" cy="15" r="1.9" fill="#fff" />
    <circle cx="22" cy="15" r="1.9" fill="#fff" />
    <rect x="10" y="14" width="8" height="2.6" rx="1" fill="#fff" />
  </svg>
);
const StarIcon = () => (
  <svg width="29" height="28" viewBox="0 0 29 28" aria-hidden="true">
    <path d="M14.5 1L18.6 9.3L27.6 10.7L21.2 17.2L22.6 26.4L14.5 22.2L6.4 26.4L7.8 17.2L1.4 10.7L10.4 9.3Z" fill={GREY} stroke={GREY} strokeWidth="1.6" strokeLinejoin="round" />
  </svg>
);

/* ---------- sidebar ---------- */

function NavItem({ label, active, children }: { label: string; active?: boolean; children: ReactNode }) {
  return (
    <button type="button" className={`flex w-full flex-col items-center gap-0.5 ${active ? "text-[#3399f5]" : "text-[#5d6985]"}`}>
      <span className="flex h-8 items-center justify-center">{children}</span>
      <span className="h-5 whitespace-nowrap text-sm leading-5">{label}</span>
    </button>
  );
}

function Sidebar() {
  return (
    <nav className="w-[74px] shrink-0 overflow-hidden bg-white px-[9px] font-['Open_Sans',sans-serif]" aria-label="Categories">
      <fieldset className="flex min-w-0 flex-col gap-4 rounded-[10px] border-2 border-dashed border-[#3399f5] pt-2.5 pb-[9px]">
        <legend className="mx-auto h-5 text-sm leading-5 text-[#3399f5]">VIP</legend>
        <NavItem label="Cour..."><CourseIcon /></NavItem>
        <NavItem label="Phone" active><PhoneIcon /></NavItem>
        <NavItem label="Com..."><ComputerIcon /></NavItem>
      </fieldset>
      <fieldset className="mt-[25px] flex min-w-0 flex-col gap-4 rounded-[10px] border-2 border-dashed border-[#5d6985] pt-2.5 pb-[9px]">
        <legend className="mx-auto h-5 text-sm leading-5 text-[#5d6985]">Custom</legend>
        <NavItem label="Drone"><DroneIcon /></NavItem>
        <NavItem label="Gam..."><GameIcon /></NavItem>
        <NavItem label="Car"><CarIcon /></NavItem>
      </fieldset>
      <div className="mt-5">
        <NavItem label="Favorites"><StarIcon /></NavItem>
      </div>
    </nav>
  );
}

/* ---------- tree ---------- */

type Row = { kind: "pdf" | "pcb" | "dir"; level: 1 | 2 | 3; text: string; active?: boolean };

const ROWS: Row[] = [
  { kind: "pdf", level: 3, text: "P40 Three No Ringing Tones file" },
  { kind: "pdf", level: 3, text: "P40 corrosion, no WiFi, no ringi" },
  { kind: "pdf", level: 3, text: "P40 security chip.pdf" },
  { kind: "pdf", level: 3, text: "P40 water inflow without wifi ar" },
  { kind: "dir", level: 2, text: "Schematic and boardview" },
  { kind: "pdf", level: 3, text: "P40 Circuit diagram.pdf" },
  { kind: "pdf", level: 3, text: "P40 Schematic.pdf" },
  { kind: "pcb", level: 3, text: "P40-HN3ANNAM MB PCB layer" },
  { kind: "pcb", level: 3, text: "P40-HN3ANNAM MB+SUB YiDi" },
  { kind: "pcb", level: 3, text: "P40-HN3ANNVAAM YiDianTon", active: true },
  { kind: "pcb", level: 3, text: "P40-HN3ANNVAAM boardview" },
  { kind: "pdf", level: 3, text: "P40-HN3ANNVAAM image.pdf" },
  { kind: "pdf", level: 3, text: "P40-HN3ANNVAAM-Componer" },
  { kind: "pdf", level: 3, text: "P40-enter port 1.0.pdf" },
  { kind: "pcb", level: 3, text: "P40-shim-A PCB layer.pcb" },
  { kind: "pcb", level: 3, text: "P40-shim-B PCB layer.pcb" },
  { kind: "dir", level: 1, text: "P30 Lite" },
  { kind: "pdf", level: 2, text: "P30 Schematic.pdf" },
  { kind: "pdf", level: 2, text: "P30_Lite HL2MARM location.pdf" },
  { kind: "pdf", level: 2, text: "P30_Lite service guide.pdf" },
  { kind: "dir", level: 1, text: "P30 Pro" },
  { kind: "dir", level: 2, text: "Diode value" },
  { kind: "pdf", level: 3, text: "P30PRO Display Base to Ground" },
  { kind: "dir", level: 2, text: "Repair Case" },
  { kind: "pdf", level: 3, text: "Huawei P30 Pro turns on the lo" },
  { kind: "pdf", level: 3, text: "Huawei P30PRO repair no call s" },
  { kind: "pdf", level: 3, text: "Huawei P30Pro does not displa" },
  { kind: "pdf", level: 3, text: "Huawei p30pro card has no WiF" },
  { kind: "pdf", level: 3, text: "Huawei p30pro has no receiver," },
  { kind: "pdf", level: 3, text: "P30 Pro VOGUE-AL00C Front an" },
  { kind: "pdf", level: 3, text: "P30 Pro VOGUE-AL00C GSM P" },
];

function rowIndent(row: Row) {
  if (row.kind === "dir") return row.level === 1 ? "pl-[61px] gap-1.5" : "pl-[81px] gap-1.5";
  return row.level === 2 ? "pl-[83px] gap-1" : "pl-[103px] gap-1";
}

function Tree() {
  return (
    <div className="min-w-0 flex-1 overflow-hidden bg-linear-to-r from-[#d8e1f0] via-[#f7f7f7] via-[30px] to-[#f7f7f7]">
      <ul className="-mt-1">
        {ROWS.map((row) => (
          <li key={row.text}>
            <button type="button" className={`flex h-6 w-full items-center text-sm whitespace-nowrap ${rowIndent(row)} ${row.active ? "text-[#4a90ff]" : "text-black"}`}>
              {row.kind === "pdf" ? <PdfIcon /> : row.kind === "pcb" ? <PcbIcon /> : <Minus />}
              <span className="pt-0.5">{row.text}</span>
            </button>
          </li>
        ))}
      </ul>
    </div>
  );
}

/* ---------- toolbar ---------- */

function Tool({ label, on, children }: { label: string; on?: boolean; children: ReactNode }) {
  return (
    <button type="button" aria-label={label} className={`flex h-6 w-6 shrink-0 items-center justify-center ${on ? "bg-[#b9d0fb]" : ""}`}>
      {children}
    </button>
  );
}
const Sep = () => <span className="mx-px h-5 w-px shrink-0 bg-[#cfcfcf]" />;

function Toolbar() {
  return (
    <div className="flex h-[26px] shrink-0 items-center gap-0.5 bg-[#fafafa] pr-1.5 pl-[5px]">
      <Tool label="Split view"><Icon width={1}><path d="M1.5 1.5H8.5V18.5H1.5ZM12.5 1.5H19.5V18.5H12.5Z" strokeLinejoin="miter" /></Icon></Tool>
      <Sep />
      <Tool label="Zoom in"><Icon color="#000" width={1.8}><circle cx="9" cy="9.5" r="6.5" /><path d="M14 14.5L17.5 18M6 9.5H12M9 6.5V12.5" /></Icon></Tool>
      <Tool label="Zoom out"><Icon color="#444" width={1.3}><circle cx="10" cy="9.5" r="7" /><path d="M15 14.5L19 18.5M7 9.5H13" /></Icon></Tool>
      <Sep />
      <Tool label="Fit"><Icon color="#444" width={1.2}><path d="M2.5 6V4.5Q2.5 2.5 4.5 2.5H6M14 2.5H15.5Q17.5 2.5 17.5 4.5V6M17.5 14V15.5Q17.5 17.5 15.5 17.5H14M6 17.5H4.5Q2.5 17.5 2.5 15.5V14" /><circle cx="10" cy="10" r="5" /></Icon></Tool>
      <Sep />
      <Tool label="Rotate left"><Icon color="#333" width={1.5}><rect x="1.5" y="7.5" width="15" height="11.5" rx="1.5" /><path d="M18.5 6Q17.5 3 13 3H8.5M10.5 1L8 3L10.5 5.5" /></Icon></Tool>
      <Tool label="Rotate right"><Icon color="#333" width={1.4}><rect x="4.5" y="7.5" width="14.5" height="11.5" rx="1.5" /><path d="M2.5 6Q3.5 3 8 3H12.5M10.5 1L13 3L10.5 5.5" /></Icon></Tool>
      <Sep />
      <Tool label="Paint"><Icon color="#333" width={1.4}><rect x="2" y="1.5" width="13.5" height="4.5" rx="1" /><path d="M15.5 3.5H18V8.5L9 10V12M7.5 12H10.5V18.5H7.5Z" /></Icon></Tool>
      <Sep />
      <Tool label="Mirror"><Icon color="#333" width={1.3}><path d="M10 2V18M1.5 2.5V17.5L6.5 15V5ZM18.5 2.5V17.5L13.5 15V5Z" /></Icon></Tool>
      <Tool label="Lamp" on><Icon color="#f5121d" width={1.5}><path d="M10 1.5V5M1.5 12Q1.5 5 10 5Q18.5 5 18.5 12ZM6.5 12Q7 15 10 15Q13 15 13.5 12M4 15L3 16.5M16 15L17 16.5M7 17L6.5 18.5M13 17L13.5 18.5M10 17.5V19" /></Icon></Tool>
      <Tool label="3D view"><span className="text-sm">3D</span></Tool>
      <Tool label="Diode" on><svg width="24" height="20" viewBox="0 0 24 20" aria-hidden="true"><path d="M1 10H23M19.5 4V16" stroke="#4a90ff" strokeWidth="1.6" /><path d="M7.5 4V16L18.5 10Z" fill="#4a90ff" /></svg></Tool>
      <Tool label="Nets" on>
        <svg width="22" height="22" viewBox="0 0 22 22" fill="none" strokeWidth="1.2" aria-hidden="true">
          <rect x="1.5" y="1.5" width="19" height="19" rx="2.5" stroke="#333" />
          <path d="M8.5 6L11 10L19 18" stroke="#16c43c" strokeWidth="1.6" /><circle cx="7.5" cy="5" r="1.5" stroke="#16c43c" />
          <path d="M14 6L19.5 11" stroke="#4a90ff" /><circle cx="13" cy="4.8" r="1.5" stroke="#4a90ff" />
          <path d="M5.5 11L8 13.5L10 13.5L13 17.5M6 17L9 14.5" stroke="#f5121d" /><circle cx="4.6" cy="10" r="1.3" stroke="#f5121d" /><circle cx="5" cy="17.8" r="1.3" stroke="#f5121d" />
        </svg>
      </Tool>
      <Tool label="Curve"><Icon width={1.6} color="#222"><circle cx="17" cy="3" r="2" /><circle cx="3.5" cy="17" r="2" /><path d="M15 3.5Q5 4.5 3.8 15" /></Icon></Tool>
      <Sep />
      <Tool label="Mouse"><Icon width={1.3} color="#333"><rect x="4" y="2" width="13" height="16.5" rx="4.5" /><path d="M4 9.5H8.5M12.5 9.5H17M10.5 2V5" /><rect x="9" y="5" width="3" height="6" rx="1.2" /></Icon></Tool>
      <Sep />
      <button type="button" className="h-[22px] w-[109px] shrink-0 border border-[#f5121d] bg-white text-sm leading-5">[ColorScheme]</button>
      <Sep />
      <Tool label="Show"><Icon color="#4a90ff" width={1.3}><path d="M1 10Q5 4 10 4Q15 4 19 10Q15 16 10 16Q5 16 1 10Z" /><circle cx="10" cy="10" r="4" /><circle cx="10" cy="10" r="1.6" /></Icon></Tool>
      <button type="button" aria-label="Side panel" className="ml-auto">
        <svg width="22" height="18" viewBox="0 0 22 18" fill="none" stroke="#757575" aria-hidden="true">
          <rect x="1" y="1" width="20" height="16" strokeWidth="2" />
          <path d="M7.5 1V17M11 5.5H17M11 9H17M11 12.5H17" strokeWidth="1.4" />
        </svg>
      </button>
    </div>
  );
}

const MENU = ["File(F)", "VIP(V)", "Tool(T)", "Settings(S)", "PCB View settings(S)"];

export default function App() {
  return (
    <div className="flex h-screen flex-col overflow-hidden bg-white font-['Noto_Sans','Open_Sans',sans-serif] text-sm text-black">
      <header className="flex h-10 shrink-0 items-center bg-linear-to-r from-[#22a7ff] via-[#2f74ff] via-15% to-[#2b9fff] pr-4 pl-3 text-white">
        <svg width="26" height="30" viewBox="0 0 26 30" aria-hidden="true">
          <circle cx="13" cy="15" r="7" fill="none" stroke="#9fd5ff" strokeWidth="1" strokeDasharray="8 3" />
          <path d="M13 1L15 8Q15 12 13 13Q11 12 11 8ZM13 29L15 22Q15 18 13 17Q11 18 11 22ZM1 15L7 13.6Q10 13.4 11 15Q10 16.6 7 16.4ZM25 15L19 13.6Q16 13.4 15 15Q16 16.6 19 16.4Z" fill="#fff" />
        </svg>
        <h1 className="ml-3 flex-1 pt-0.5 text-sm whitespace-pre">XZZ Schematics V4.77 [ VIP Due date: 2025-10-30 17:50:47 ]</h1>
        <button type="button" aria-label="Toolbox">
          <svg width="18" height="18" viewBox="0 0 18 18" fill="none" stroke="#e8e03c" strokeWidth="1.5" strokeLinecap="round" aria-hidden="true">
            <rect x="1.5" y="4.5" width="15" height="12" rx="2" />
            <path d="M5.5 4.5V3Q5.5 1.5 7 1.5H11Q12.5 1.5 12.5 3V4.5M5 9.5H13M2 7L3 6.5M16 7L15 6.5" />
          </svg>
        </button>
        <span className="mx-2.5 h-5 w-px bg-[#7fc0ff]" />
        <div className="flex items-center gap-3">
          {[["Minimize", "M1 9H17"], ["Maximize", "M4 1.5H14Q16.5 1.5 16.5 4V14Q16.5 16.5 14 16.5H4Q1.5 16.5 1.5 14V4Q1.5 1.5 4 1.5Z"], ["Close", "M1.5 1.5L16.5 16.5M16.5 1.5L1.5 16.5"]].map(([label, d]) => (
            <button key={label} type="button" aria-label={label}>
              <svg width="18" height="18" viewBox="0 0 18 18" fill="none" stroke="#fff" strokeWidth="1.6" aria-hidden="true"><path d={d} /></svg>
            </button>
          ))}
        </div>
      </header>

      <div className="flex h-8 shrink-0 items-center gap-[18px] border-b border-[#d9d9d9] bg-[#efefef] pt-0.5 pl-[18px]">
        {MENU.map((m) => (
          <button key={m} type="button" className="text-sm">{m}</button>
        ))}
      </div>

      <div className="flex min-h-0 flex-1">
        <aside className="flex w-[431px] shrink-0 flex-col border-r border-[#d9d9d9]">
          <div className="flex h-10 shrink-0 items-center border-b border-[#d9d9d9] bg-white pr-[5px] pl-[5px]">
            <button type="button" className="h-[30px] w-[49px] shrink-0 rounded-[3px] border border-[#d9d9d9] text-sm">Shrink</button>
            <label className="ml-2.5 flex h-[30px] w-[302px] shrink-0 items-center rounded-[3px] border border-[#d9d9d9] pr-2 pl-2">
              <input aria-label="Model number" placeholder="Please input the model number or PCB" className="min-w-0 flex-1 text-sm outline-none placeholder:text-[#b9bdc5]" />
              <svg width="14" height="10" viewBox="0 0 14 10" fill="none" stroke="#8f959e" strokeWidth="1.4" aria-hidden="true"><path d="M1 1.5L7 8L13 1.5" /></svg>
            </label>
            <button type="button" aria-label="Search" className="ml-2.5 flex h-[30px] w-[49px] shrink-0 items-center justify-center rounded-[3px] bg-[#4a90ff]">
              <svg width="20" height="20" viewBox="0 0 20 20" fill="none" stroke="#fff" strokeWidth="1.5" aria-hidden="true"><circle cx="10" cy="10" r="8.3" /><path d="M15.8 15.8L18.5 18.5" /></svg>
            </button>
          </div>
          <div className="flex min-h-0 flex-1">
            <Sidebar />
            <Tree />
            <div className="w-2.5 shrink-0 bg-[#666]" />
            <div className="flex w-[13px] shrink-0 flex-col items-center bg-[#efefef] pt-1.5">
              <svg width="9" height="6" viewBox="0 0 9 6" fill="none" stroke="#444" aria-hidden="true"><path d="M0.5 5L4.5 1L8.5 5" /></svg>
              <div className="mt-[140px] h-[49px] w-2.5 rounded-full bg-[#666]" />
            </div>
          </div>
        </aside>

        <div className="relative w-2.5 shrink-0 border-r border-[#d9d9d9] bg-[#fafffa]">
          <button type="button" aria-label="Toggle left panel" className="absolute top-[336px] left-0">
            <svg width="10" height="112" viewBox="0 0 10 112" fill="none" aria-hidden="true">
              <path d="M0.5 1L8.5 14V98L0.5 111Z" fill="#d6e9fd" stroke="#9fd0f8" />
              <path d="M5.5 52L2.5 55L5.5 58" stroke="#2f97f0" strokeWidth="1.2" />
            </svg>
          </button>
        </div>

        <main className="flex min-w-0 flex-1 flex-col">
          <div className="flex h-[34px] shrink-0 items-center gap-[5px] border-b border-[#d9d9d9] bg-[#fafafa] pr-2.5 pl-2">
            <button type="button" className="flex h-6 w-[139px] items-center gap-0.5 rounded-[3px] border border-[#777] pl-[5px] text-sm whitespace-nowrap text-[#808080]">
              <Icon color="#000" width={1.6}><path d="M1.5 10L10 2L18.5 10M4 8.5V18H16V8.5M8 18V12H12V18" /></Icon>
              Member Center
            </button>
            <button type="button" className="h-6 w-[287px] rounded-[3px] border border-black bg-white font-['Open_Sans',sans-serif] text-[15px] leading-5 font-bold whitespace-nowrap">P40-HN3ANNVAAM YiDianTong.pcb</button>
            <button type="button" aria-label="Close all" className="ml-auto">
              <svg width="20" height="20" viewBox="0 0 20 20" fill="none" aria-hidden="true">
                <path d="M2 15V2H16" stroke="#757575" strokeWidth="2" />
                <rect x="5" y="5" width="14" height="14" rx="2" fill="#757575" />
                <path d="M9 9L15 15M15 9L9 15" stroke="#fff" strokeWidth="1.6" />
              </svg>
            </button>
          </div>
          <div className="flex min-h-0 flex-1">
            <div className="flex min-w-0 flex-1 flex-col">
              <Toolbar />
              <div className="min-h-0 flex-1 overflow-hidden bg-white">
                <BoardView />
              </div>
            </div>
            <div className="relative w-2.5 shrink-0 border-l border-[#d9d9d9] bg-[#fafafa]">
              <button type="button" aria-label="Toggle right panel" className="absolute top-[326px] right-0">
                <svg width="9" height="112" viewBox="0 0 9 112" fill="none" aria-hidden="true">
                  <path d="M8.5 1L0.5 14V98L8.5 111Z" fill="#d6e9fd" stroke="#9fd0f8" />
                  <path d="M6 53L3 56L6 59" stroke="#2f97f0" strokeWidth="1.2" />
                </svg>
              </button>
            </div>
          </div>
        </main>
      </div>

      <footer className="h-5 shrink-0 bg-[#0091dc] text-center font-['DejaVu_Sans_Mono',monospace] text-[15px] leading-5 text-white">
        XZZ Schematics https://www.xzz.hk
      </footer>
    </div>
  );
}
